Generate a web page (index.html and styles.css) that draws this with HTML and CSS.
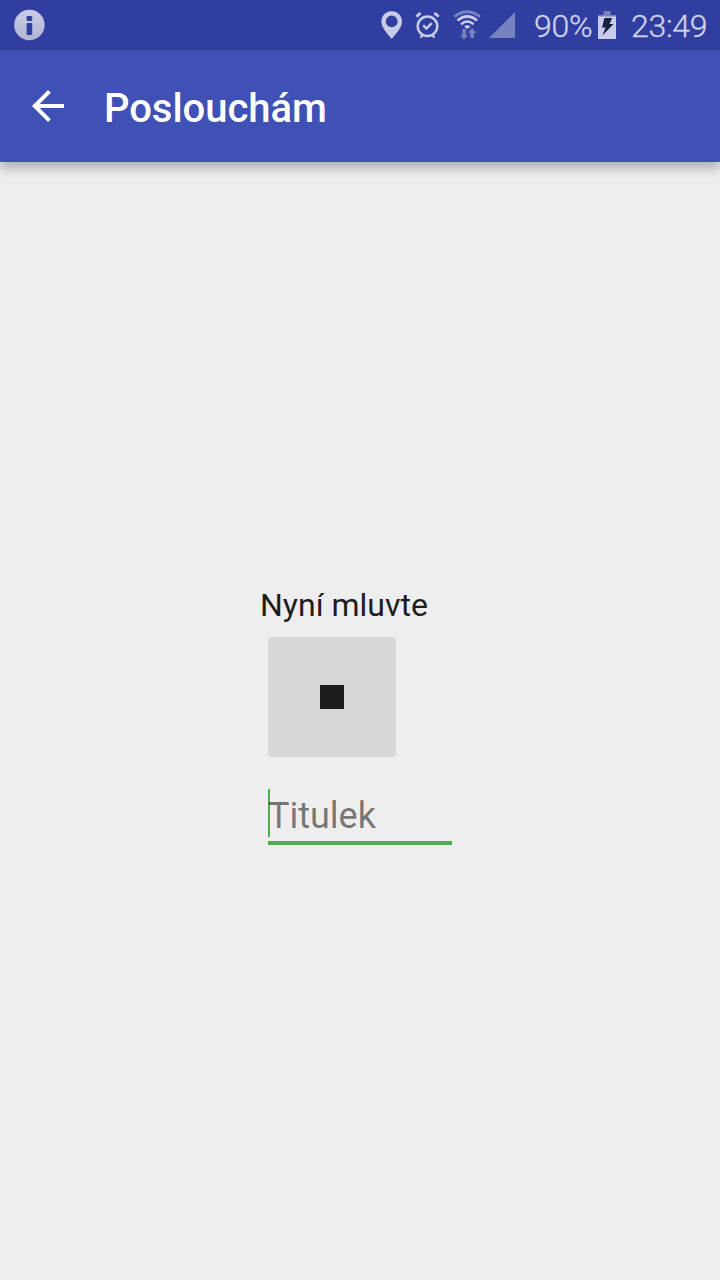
FILE: index.html
```html
<!DOCTYPE html>
<html lang="cs">
<head>
<meta charset="utf-8">
<title>Poslouchám</title>
<link rel="stylesheet" href="styles.css">
</head>
<body>
<div class="status-bar">
  <svg class="info" width="32" height="32" viewBox="0 0 32 32">
    <defs><linearGradient id="g" x1="0" y1="0" x2="0" y2="1"><stop offset="0" stop-color="#c9cce6"/><stop offset="1" stop-color="#b2b5d3"/></linearGradient></defs>
    <circle cx="15.4" cy="16" r="15.2" fill="url(#g)"/>
    <rect x="12.6" y="7" width="5.6" height="5" rx="1.2" fill="#303f9f"/>
    <rect x="12.6" y="14" width="5.6" height="12" rx="1.2" fill="#303f9f"/>
  </svg>
  <div class="status-right">
    <svg class="symbols" width="146" height="50" viewBox="374 0 146 50">
      <path fill="#c9cce8" fill-rule="evenodd" d="M391.700 11.200c-5.900 0-10.300 4.500-10.300 10.300 0 5.300 4.200 10.200 10.300 17.500 6.100-7.300 10.300-12.200 10.300-17.500 0-5.800-4.400-10.300-10.300-10.300zM391.700 15.500a5.900 5.900 0 1 1 0 11.800a5.900 5.900 0 1 1 0-11.800z"/>
      <g fill="none" stroke="#c9cce8">
        <circle cx="427.500" cy="26.300" r="9.800" stroke-width="2.500"/>
        <path stroke-width="2.400" d="M423.200 25.200l3.200 3.400 5.400-5.500"/>
        <path stroke-width="2.800" d="M416.600 16.700c1-1.600 2.400-2.800 4.200-3.500M438.400 16.700c-1-1.600-2.400-2.800-4.200-3.500"/>
        <path stroke-width="2.300" d="M422.500 34.200l-1.700 3.500M432.500 34.200l1.700 3.500"/>
        <path stroke="#7781c0" stroke-width="3" d="M454.500 16.800Q467.300 6.800 480 16.800"/>
        <path stroke-width="2.600" d="M457.500 20.400Q467.300 12.300 477.100 20.400"/>
        <path stroke-width="2.600" d="M461 24.200Q467.300 18.800 473.600 24.200"/>
      </g>
      <path fill="#c9cce8" d="M464.100 26.400q3.200-2.400 6.400 0l-3.200 2.700z"/>
      <path fill="#7781c0" d="M462.300 29h3.600v6h2.200l-4 4.400-4-4.400h2.200zM472 27.700l4.200 5.300H474v5h-3.800v-5H468zM489 38h26V12z"/>
    </svg>
    <span class="percent">90%</span>
    <svg class="battery" width="20" height="32" viewBox="0 0 20 32">
      <path fill="#7781c0" d="M6.500 2h7v4H19v2H1V6h5.500z"/>
      <path fill="#c9cce8" d="M1 7.500h18V30H1z"/>
      <path fill="#17203f" d="M7.500 9h7.700l-2.700 6h4L5.500 26.500l3-8H5z"/>
    </svg>
    <span class="clock">23:49</span>
  </div>
</div>
<header class="app-bar">
  <svg class="back" width="48" height="48" viewBox="0 0 24 24"><path fill="#fff" d="M20 11H7.830l5.590-5.590L12 4l-8 8 8 8 1.410-1.410L7.830 13H20v-2z"/></svg>
  <h1 class="title">Poslouchám</h1>
</header>
<main class="content">
  <div class="form">
    <div class="prompt">Nyní mluvte</div>
    <button class="stop" aria-label="Stop"><span class="stop-icon"></span></button>
    <div class="field"><span class="caret"></span><span class="hint">Titulek</span></div>
  </div>
</main>
</body>
</html>
```
FILE: styles.css
```css
* { box-sizing: border-box; }
body {
  margin: 0;
  width: 720px;
  height: 1280px;
  display: flex;
  flex-direction: column;
  background: #eeeeee;
  font-family: Roboto, "Noto Sans", sans-serif;
  overflow: hidden;
}
.status-bar {
  height: 50px;
  flex: none;
  display: flex;
  align-items: center;
  justify-content: space-between;
  padding: 0 13px 0 14px;
  background: #303f9f;
}
.status-right {
  display: flex;
  align-items: center;
  color: #d0d3ea;
  font-size: 32px;
  font-weight: 300;
  line-height: 50px;
  letter-spacing: -0.3px;
  -webkit-text-stroke: 0.3px #d0d3ea;
}
svg { display: block; flex: none; }
.symbols { margin-right: 14px; }
.percent { width: 63px; padding-top: 2px; }
.battery { margin-top: -1px; }
.clock { width: 76px; margin-left: 14px; padding-top: 2px; white-space: nowrap; }
.app-bar {
  height: 112px;
  flex: none;
  display: flex;
  align-items: center;
  padding: 0 24px;
  background: #3f51b5;
  box-shadow: 0 7px 10px rgba(0, 0, 0, 0.25);
}
.title {
  margin: 5px 0 0 32px;
  color: #fff;
  font-size: 40px;
  font-weight: 500;
  line-height: 48px;
  letter-spacing: -0.05px;
}
.content {
  flex: 1;
  display: flex;
  justify-content: center;
  align-items: center;
}
.form { width: 200px; height: 268px; display: flex; flex-direction: column; }
.prompt {
  height: 50px;
  color: #1d1d1d;
  font-size: 32px;
  line-height: 36px;
  white-space: nowrap;
}
.stop {
  display: flex;
  align-items: center;
  justify-content: center;
  width: 128px;
  height: 120px;
  margin-left: 8px;
  padding: 0;
  border: 0;
  border-radius: 4px;
  background: #d6d8d7;
}
.stop-icon { width: 24px; height: 24px; background: #1d1d1d; }
.field {
  display: flex;
  width: 184px;
  height: 56px;
  margin: 32px 0 0 8px;
  border-bottom: 4px solid #4caf50;
}
.caret { width: 2px; height: 48px; background: #4caf50; }
.hint {
  margin-left: -2px;
  color: rgba(0, 0, 0, 0.52);
  font-size: 36px;
  line-height: 54px;
}
```
